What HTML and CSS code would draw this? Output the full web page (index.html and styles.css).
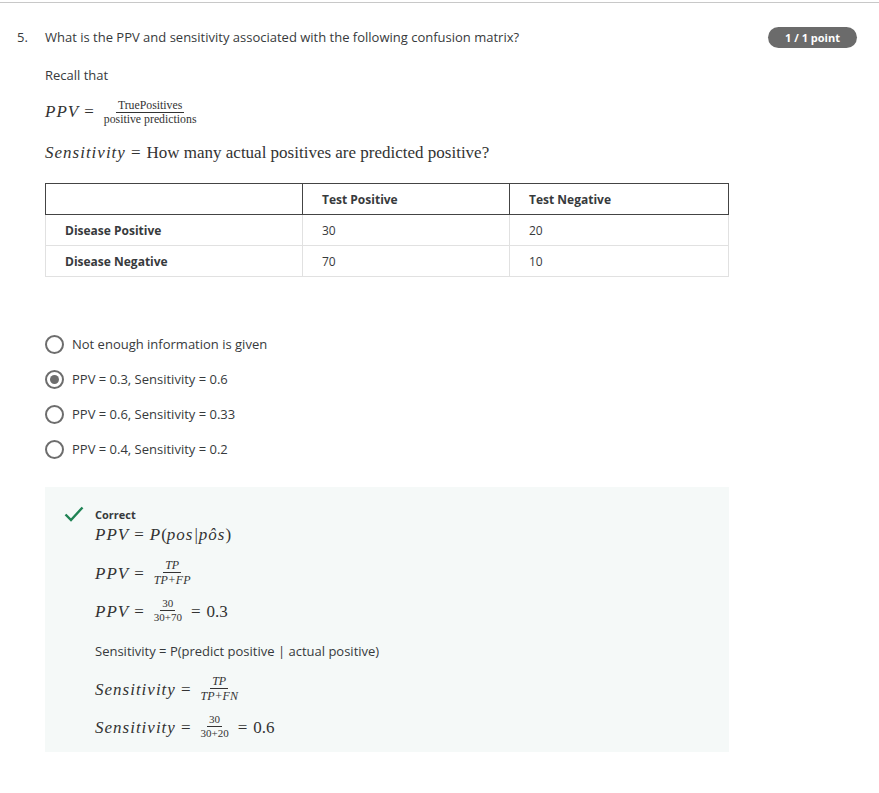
FILE: index.html
```html
<!DOCTYPE html>
<html>
<head>
<meta charset="utf-8">
<link rel="stylesheet" href="styles.css">
</head>
<body>
<div class="topline"></div>
<div class="question">
  <div class="qhead">
    <span class="qnum">5.</span>
    <span class="qtext">What is the PPV and sensitivity associated with the following confusion matrix?</span>
    <span class="badge">1 / 1 point</span>
  </div>
  <div class="content">
    <p class="recall">Recall that</p>
    <div class="math m1">
      <span class="mi">PPV</span><span class="eq">=</span>
      <span class="frac small"><span class="num">TruePositives</span><span class="den">positive predictions</span></span>
    </div>
    <div class="math m2">
      <span class="mi">Sensitivity</span><span class="eq">=</span><span class="rm">How many actual positives are predicted positive?</span>
    </div>
    <table class="matrix">
      <thead>
        <tr><th class="c1"></th><th class="c2">Test Positive</th><th class="c3">Test Negative</th></tr>
      </thead>
      <tbody>
        <tr><td class="rowh">Disease Positive</td><td>30</td><td>20</td></tr>
        <tr><td class="rowh">Disease Negative</td><td>70</td><td>10</td></tr>
      </tbody>
    </table>
    <div class="options">
      <div class="opt"><span class="radio"></span><span>Not enough information is given</span></div>
      <div class="opt"><span class="radio on"></span><span>PPV = 0.3, Sensitivity = 0.6</span></div>
      <div class="opt"><span class="radio"></span><span>PPV = 0.6, Sensitivity = 0.33</span></div>
      <div class="opt"><span class="radio"></span><span>PPV = 0.4, Sensitivity = 0.2</span></div>
    </div>
    <div class="feedback">
      <div class="fbhead">
        <svg class="check" width="20" height="16" viewBox="0 0 20 16"><path d="M1.5 8.5 L7 14 L18.5 1.5" fill="none" stroke="#1f8354" stroke-width="2.4"/></svg>
        <span class="correct">Correct</span>
      </div>
      <div class="fbbody">
        <div class="math f1"><span class="mi">PPV</span><span class="eq">=</span><span class="mi">P</span><span class="rm">(</span><span class="mi">pos</span><span class="rm bar">|</span><span class="mi">p<span class="hat">ô</span>s</span><span class="rm">)</span></div>
        <div class="math f2"><span class="mi">PPV</span><span class="eq">=</span><span class="frac"><span class="num it">TP</span><span class="den it">TP+FP</span></span></div>
        <div class="math f3"><span class="mi">PPV</span><span class="eq">=</span><span class="frac num-only"><span class="num">30</span><span class="den">30+70</span></span><span class="eq">=</span><span class="rm">0.3</span></div>
        <p class="fbtext">Sensitivity = P(predict positive | actual positive)</p>
        <div class="math f4"><span class="mi">Sensitivity</span><span class="eq">=</span><span class="frac"><span class="num it">TP</span><span class="den it">TP+FN</span></span></div>
        <div class="math f5"><span class="mi">Sensitivity</span><span class="eq">=</span><span class="frac num-only"><span class="num">30</span><span class="den">30+20</span></span><span class="eq">=</span><span class="rm">0.6</span></div>
      </div>
    </div>
  </div>
</div>
</body>
</html>
```
FILE: styles.css
```css
html, body { margin: 0; padding: 0; background: #fff; }
body { font-family: "Open Sans", "Liberation Sans", sans-serif; color: #373a3c; font-size: 13px; }
.topline { height: 1px; background: #c8c8c8; margin-top: 2px; }
.question { padding: 0 22px 0 17px; }
.qhead { display: flex; align-items: center; height: 22px; margin-top: 23px; }
.qnum { width: 28px; }
.qtext { flex: 1; }
.badge { background: #6b6b6b; color: #fff; font-weight: 700; font-size: 11px; border-radius: 11px; height: 21px; line-height: 21px; width: 89px; text-align: center; margin-top: 1px; }
.content { margin-left: 28px; width: 684px; }
.recall { margin: 18px 0 0; line-height: 18px; }
.math { font-family: "Liberation Serif", "DejaVu Serif", serif; color: #333; font-size: 17px; display: flex; align-items: center; white-space: nowrap; }
.mi { font-style: italic; letter-spacing: 1px; }
.eq { margin: 0 6px 0 5px; }
.rm { font-style: normal; }
.frac { display: inline-flex; flex-direction: column; align-items: center; font-size: 12px; line-height: 12px; margin: 0 2px; position: relative; top: -2px; }
.frac .num { padding: 0 2px 1px; border-bottom: 1px solid #333; }
.frac .den { padding: 1px 2px 0; }
.frac.small { font-size: 11.8px; line-height: 11px; top: 0; }
.frac.num-only { font-size: 11px; line-height: 11px; }
.it { font-style: italic; }
.m1 { margin-top: 15px; height: 26px; }
.m2 { margin-top: 16px; height: 24px; }
.matrix { margin-top: 18px; width: 684px; border-collapse: collapse; font-size: 12px; }
.matrix th { text-align: left; font-weight: 700; border: 1px solid #444; height: 30px; padding: 0 0 0 19px; }
.matrix th.c1 { width: 237px; }
.matrix th.c2 { width: 187px; }
.matrix td { border: 1px solid #e1e1e1; height: 30px; padding: 0 0 0 19px; }
.matrix td.rowh { font-weight: 700; }
.options { margin-top: 57px; }
.opt { display: flex; align-items: center; height: 20px; margin-bottom: 15px; }
.radio { box-sizing: border-box; width: 19px; height: 19px; border: 2px solid #6d6d6d; border-radius: 50%; margin-right: 8px; display: flex; align-items: center; justify-content: center; }
.radio.on::after { content: ""; width: 9px; height: 9px; border-radius: 50%; background: #6d6d6d; }
.feedback { margin-top: 28px; background: #f5f9f8; height: 265px; box-sizing: border-box; padding: 18px 0 0 19px; }
.fbhead { display: flex; align-items: center; height: 18px; }
.check { margin-right: 11px; }
.correct { font-weight: 700; font-size: 11px; }
.fbbody { margin-left: 31px; }
.f1 { height: 24px; margin-top: 0; }
.f2 { height: 26px; margin-top: 14px; }
.f3 { height: 26px; margin-top: 12px; }
.fbtext { margin: 17px 0 0; line-height: 18px; }
.f4 { height: 26px; margin-top: 17px; }
.f5 { height: 26px; margin-top: 12px; }
.bar { margin: 0 1px; }
```
